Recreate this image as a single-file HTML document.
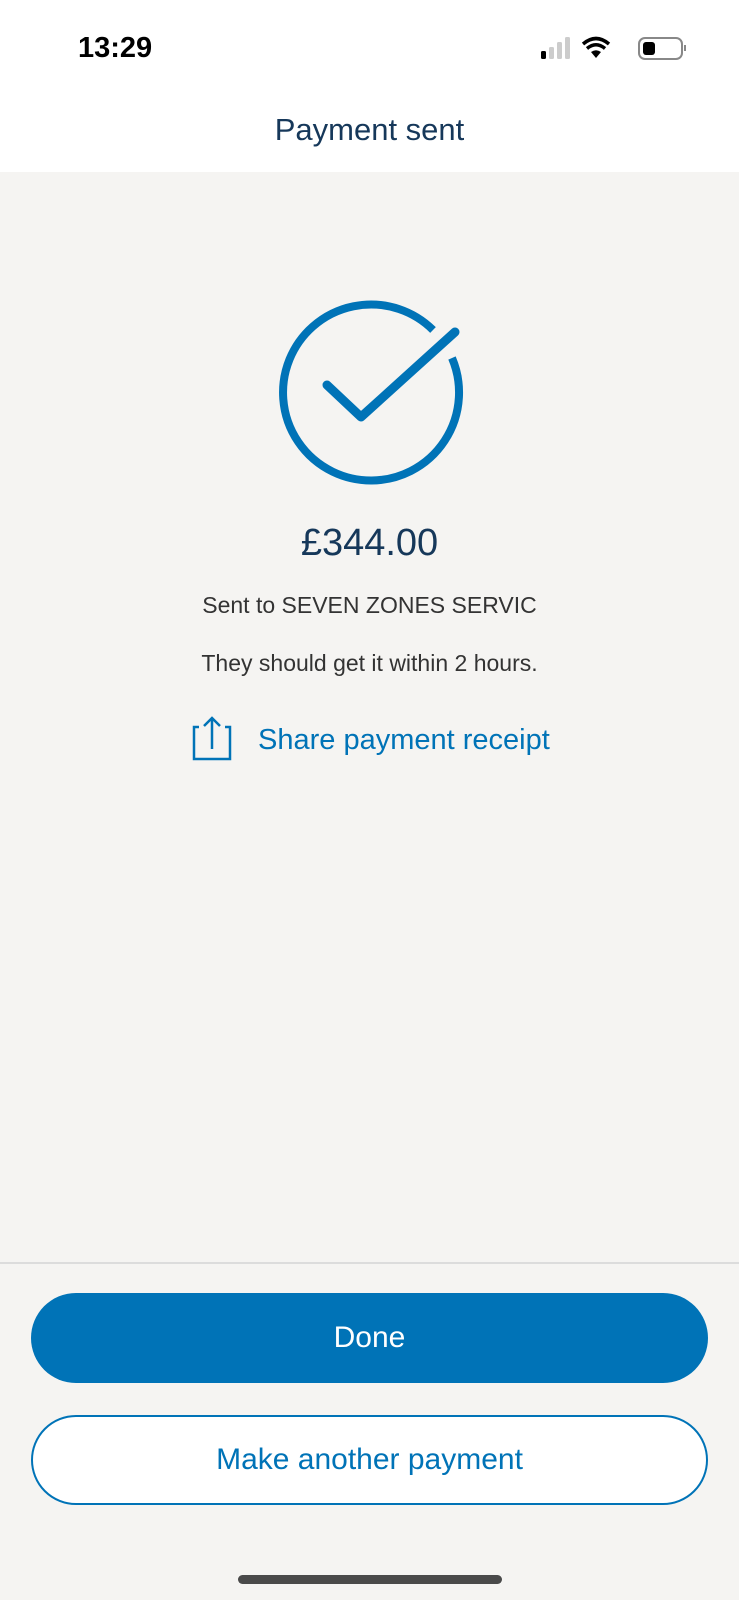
<!DOCTYPE html>
<html><head><meta charset="utf-8"><style>
*{margin:0;padding:0;box-sizing:border-box}
body{width:739px;height:1600px;background:#f5f4f2;font-family:"Liberation Sans",sans-serif;position:relative;overflow:hidden}
.hdr{position:absolute;left:0;top:0;width:739px;height:172px;background:#fff}
.t{position:absolute;left:0;width:739px;text-align:center}
.btn{position:absolute;left:31px;width:677px;height:90px;border-radius:45px;display:flex;align-items:center;justify-content:center;font-size:30px}
</style></head><body>
<div class="hdr"></div>
<div style="position:absolute;left:78px;top:32px;font-size:29px;font-weight:bold;color:#000">13:29</div>
<svg style="position:absolute;left:535px;top:36px" width="160" height="30" viewBox="0 0 160 30">
<rect x="6" y="15" width="5" height="8" rx="1.5" fill="#000"/>
<rect x="14" y="11" width="5" height="12" rx="1.5" fill="#ccc"/>
<rect x="22" y="6" width="5" height="17" rx="1.5" fill="#ccc"/>
<rect x="30" y="1" width="5" height="22" rx="1.5" fill="#ccc"/>
<path d="M48 8 Q61 -3 74 8" stroke="#000" stroke-width="3.5" fill="none"/>
<path d="M52 12.5 Q61 5 70 12.5" stroke="#000" stroke-width="3.5" fill="none"/>
<path d="M56 16 Q61 12.5 66 16 L61 22Z" fill="#000"/>
<rect x="104" y="2" width="43" height="21" rx="6" stroke="#888" stroke-width="2" fill="none"/>
<rect x="108" y="6" width="12" height="13" rx="3" fill="#000"/>
<rect x="149" y="9" width="2" height="6" fill="#888"/>
</svg>
<div class="t" style="top:112px;font-size:31px;color:#16385a">Payment sent</div>
<svg style="position:absolute;left:0;top:0" width="739" height="520">
<path d="M452 358 A88 88 0 1 1 433 330" stroke="#0073b7" stroke-width="8" fill="none" stroke-linecap="butt"/>
<path d="M327 385 L361 417 L455 332" stroke="#0073b7" stroke-width="9" fill="none" stroke-linecap="round" stroke-linejoin="round"/>
</svg>
<div class="t" style="top:522px;font-size:38px;color:#16385a">£344.00</div>
<div class="t" style="top:592px;font-size:23px;color:#333">Sent to SEVEN ZONES SERVIC</div>
<div class="t" style="top:650px;font-size:23px;color:#333">They should get it within 2 hours.</div>
<svg style="position:absolute;left:190px;top:714px" width="46" height="48" viewBox="0 0 46 48">
<path d="M9 13 H4 V45 H40 V13 H35" stroke="#0073b7" stroke-width="2.5" fill="none"/>
<path d="M22 35 V5 M14 12 L22 4 L30 12" stroke="#0073b7" stroke-width="2.5" fill="none"/>
</svg>
<div style="position:absolute;left:258px;top:724px;font-size:29px;color:#0073b7">Share payment receipt</div>
<div style="position:absolute;left:0;top:1262px;width:739px;height:2px;background:#dcdcdc"></div>
<div class="btn" style="top:1293px;background:#0073b7;color:#fff">Done</div>
<div class="btn" style="top:1415px;background:#fff;border:2px solid #0073b7;color:#0073b7">Make another payment</div>
<div style="position:absolute;left:238px;top:1575px;width:264px;height:9px;border-radius:5px;background:#4a4a4a"></div>
</body></html>
